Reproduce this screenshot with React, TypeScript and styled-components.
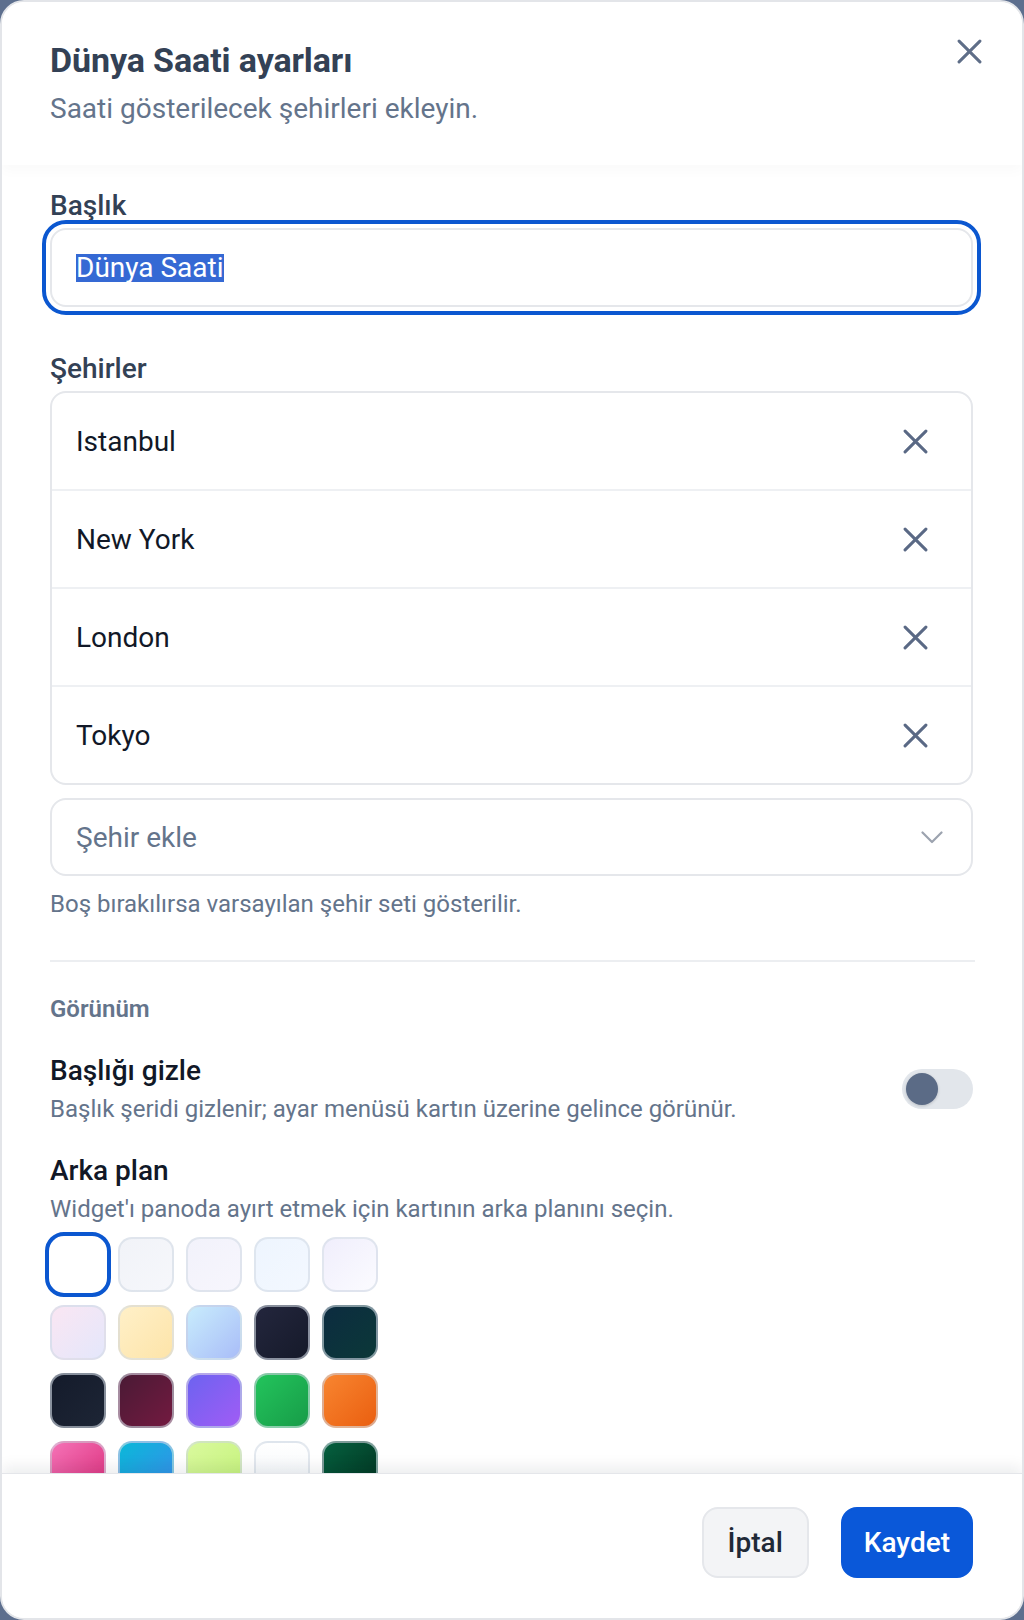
import React from 'react';
import styled, { createGlobalStyle } from 'styled-components';

interface Swatch {
  id: string;
  background: string;
  selected?: boolean;
}

const cities: string[] = ['Istanbul', 'New York', 'London', 'Tokyo'];

const swatches: Swatch[] = [
  { id: 'white', background: '#ffffff', selected: true },
  { id: 'slate', background: 'linear-gradient(135deg, #f1f3f8, #f6f7fb)' },
  { id: 'indigo', background: 'linear-gradient(135deg, #f2f2fb, #f7f6fd)' },
  { id: 'sky', background: 'linear-gradient(135deg, #eef5fe, #f3f8ff)' },
  { id: 'violet', background: 'linear-gradient(135deg, #f0eefc, #fbfbff)' },
  { id: 'blush', background: 'linear-gradient(135deg, #fae6f3, #e4e7fb)' },
  { id: 'amber', background: 'linear-gradient(135deg, #fff0c8, #fde4a9)' },
  { id: 'ice', background: 'linear-gradient(135deg, #c8ecfc, #a9bdf8)' },
  { id: 'navy', background: 'linear-gradient(135deg, #23263d, #161a2a)' },
  { id: 'teal', background: 'linear-gradient(135deg, #0c2c40, #0b3838)' },
  { id: 'ink', background: 'linear-gradient(135deg, #141b2b, #1d2535)' },
  { id: 'wine', background: 'linear-gradient(135deg, #4a1a35, #731a40)' },
  { id: 'purple', background: 'linear-gradient(135deg, #6d63f0, #a05cf5)' },
  { id: 'green', background: 'linear-gradient(135deg, #23c45c, #179c48)' },
  { id: 'orange', background: 'linear-gradient(135deg, #f88530, #ea5f10)' },
  { id: 'pink', background: 'linear-gradient(135deg, #f472b6, #dc2f7c)' },
  { id: 'cyan', background: 'linear-gradient(135deg, #0ab8d8, #3a8cec)' },
  { id: 'lime', background: 'linear-gradient(135deg, #d9f99d, #c4f27a)' },
  { id: 'paper', background: 'linear-gradient(180deg, #ffffff, #f1f5f9)' },
  { id: 'forest', background: 'linear-gradient(135deg, #05603f, #02321f)' },
];

const CloseIcon: React.FC<{ size: number }> = ({ size }) => (
  <svg width={size} height={size} viewBox="0 0 24 24" fill="none">
    <path d="M2 2L22 22M22 2L2 22" stroke="currentColor" strokeWidth="2.9" strokeLinecap="round" />
  </svg>
);

const ChevronIcon: React.FC = () => (
  <svg width="22" height="13" viewBox="0 0 22 13" fill="none">
    <path d="M1.5 1.5L11 11L20.5 1.5" stroke="currentColor" strokeWidth="2.2" strokeLinecap="round" strokeLinejoin="round" />
  </svg>
);

const App: React.FC = () => (
  <>
    <GlobalStyle />
    <Dialog>
      <Header>
        <HeaderText>
          <Title>Dünya Saati ayarları</Title>
          <Subtitle>Saati gösterilecek şehirleri ekleyin.</Subtitle>
        </HeaderText>
        <CloseButton aria-label="Kapat">
          <CloseIcon size={25} />
        </CloseButton>
      </Header>

      <Body>
        <Field>
          <Label>Başlık</Label>
          <TextBox>
            <Selected>Dünya Saati</Selected>
          </TextBox>
        </Field>

        <Field $gap={45}>
          <Label>Şehirler</Label>
          <CityList>
            {cities.map(city => (
              <CityRow key={city}>
                <CityName>{city}</CityName>
                <RemoveButton aria-label={`${city} kaldır`}>
                  <CloseIcon size={25} />
                </RemoveButton>
              </CityRow>
            ))}
          </CityList>
          <SelectBox>
            <Placeholder>Şehir ekle</Placeholder>
            <ChevronWrap>
              <ChevronIcon />
            </ChevronWrap>
          </SelectBox>
          <Helper>Boş bırakılırsa varsayılan şehir seti gösterilir.</Helper>
        </Field>

        <Divider />

        <SectionTitle>Görünüm</SectionTitle>

        <OptionRow>
          <OptionText>
            <OptionTitle>Başlığı gizle</OptionTitle>
            <OptionDesc>Başlık şeridi gizlenir; ayar menüsü kartın üzerine gelince görünür.</OptionDesc>
          </OptionText>
          <Toggle aria-label="Başlığı gizle">
            <Knob />
          </Toggle>
        </OptionRow>

        <OptionBlock>
          <OptionTitle>Arka plan</OptionTitle>
          <OptionDesc>Widget'ı panoda ayırt etmek için kartının arka planını seçin.</OptionDesc>
          <SwatchGrid>
            {swatches.map(s => (
              <SwatchButton key={s.id} $selected={!!s.selected} style={{ background: s.background }} />
            ))}
          </SwatchGrid>
        </OptionBlock>
      </Body>

      <Footer>
        <CancelButton>İptal</CancelButton>
        <SaveButton>Kaydet</SaveButton>
      </Footer>
    </Dialog>
  </>
);

const GlobalStyle = createGlobalStyle`
  * { box-sizing: border-box; }
  html, body {
    margin: 0;
    padding: 0;
    background: #5d6f8e;
    font-family: Roboto, "Noto Sans", "Liberation Sans", sans-serif;
  }
  button { font-family: inherit; }
`;

const Dialog = styled.div`
  width: 1024px;
  height: 1620px;
  background: #ffffff;
  border: 2px solid #e3e5e9;
  border-radius: 24px;
  display: flex;
  flex-direction: column;
  overflow: hidden;
`;

const Header = styled.div`
  position: relative;
  z-index: 1;
  flex: none;
  height: 163px;
  padding: 36px 37px 0 48px;
  display: flex;
  justify-content: space-between;
  align-items: flex-start;
  background: #ffffff;
  box-shadow: 0 6px 12px rgba(15, 23, 42, 0.025);
`;

const HeaderText = styled.div`
  display: flex;
  flex-direction: column;
`;

const Title = styled.h1`
  margin: 0;
  font-size: 34px;
  line-height: 44px;
  font-weight: 700;
  letter-spacing: -0.1px;
  color: #334155;
`;

const Subtitle = styled.p`
  margin: 10px 0 0;
  font-size: 28px;
  line-height: 34px;
  color: #64748b;
`;

const CloseButton = styled.button`
  width: 32px;
  height: 32px;
  margin-top: -3px;
  padding: 0;
  border: 0;
  background: none;
  color: #5f6e88;
  display: flex;
  align-items: center;
  justify-content: center;
`;

const Body = styled.div`
  flex: 1;
  min-height: 0;
  overflow: hidden;
  padding: 24px 49px 0 48px;
  display: flex;
  flex-direction: column;

  & > * {
    flex-shrink: 0;
  }
`;

const Field = styled.div<{ $gap?: number }>`
  display: flex;
  flex-direction: column;
  margin-top: ${p => p.$gap ?? 0}px;
`;

const Label = styled.label`
  font-size: 28px;
  line-height: 34px;
  font-weight: 500;
  color: #334155;
  margin-bottom: 5px;
`;

const TextBox = styled.div`
  height: 79px;
  border: 2px solid #e5e7eb;
  border-radius: 16px;
  outline: 4px solid #0b57d0;
  outline-offset: 4px;
  padding: 0 24px;
  display: flex;
  align-items: center;
  font-size: 28px;
  color: #111827;
`;

const Selected = styled.span`
  display: inline-block;
  line-height: 28px;
  background: #3569d4;
  color: #ffffff;
`;

const CityList = styled.div`
  border: 2px solid #e5e7eb;
  border-radius: 16px;
  overflow: hidden;
`;

const CityRow = styled.div`
  height: 98px;
  padding: 0 43px 0 24px;
  display: flex;
  align-items: center;
  justify-content: space-between;
  & + & {
    border-top: 2px solid #eef0f3;
  }
  &:first-child {
    height: 96px;
  }
`;

const CityName = styled.span`
  font-size: 28px;
  color: #111827;
`;

const RemoveButton = styled.button`
  padding: 0;
  border: 0;
  background: none;
  color: #5a6985;
  display: flex;
`;

const SelectBox = styled.div`
  margin-top: 13px;
  height: 78px;
  border: 2px solid #e5e7eb;
  border-radius: 16px;
  padding: 0 28px 0 24px;
  display: flex;
  align-items: center;
  justify-content: space-between;
`;

const Placeholder = styled.span`
  font-size: 28px;
  color: #64748b;
`;

const ChevronWrap = styled.span`
  display: flex;
  color: #9ca3af;
`;

const Helper = styled.p`
  margin: 12px 0 0;
  font-size: 24px;
  line-height: 32px;
  color: #64748b;
`;

const Divider = styled.hr`
  margin: 40px -2px 0 0;
  border: 0;
  height: 2px;
  background: #eceef1;
`;

const SectionTitle = styled.h2`
  margin: 31px 0 0;
  font-size: 24px;
  line-height: 32px;
  font-weight: 600;
  color: #64748b;
`;

const OptionRow = styled.div`
  margin-top: 28px;
  display: flex;
  align-items: center;
  justify-content: space-between;
`;

const OptionText = styled.div`
  display: flex;
  flex-direction: column;
`;

const OptionBlock = styled.div`
  margin-top: 28px;
  display: flex;
  flex-direction: column;
`;

const OptionTitle = styled.div`
  font-size: 28px;
  line-height: 36px;
  font-weight: 500;
  color: #111827;
`;

const OptionDesc = styled.div`
  margin-top: 4px;
  font-size: 24px;
  line-height: 32px;
  color: #64748b;
`;

const Toggle = styled.button`
  width: 71px;
  height: 40px;
  padding: 4px;
  border: 0;
  border-radius: 20px;
  background: #e2e6eb;
  display: flex;
  align-items: center;
`;

const Knob = styled.span`
  width: 32px;
  height: 32px;
  border-radius: 50%;
  background: #5b6b86;
  box-shadow: 0 1px 3px rgba(15, 23, 42, 0.2);
`;

const SwatchGrid = styled.div`
  margin-top: 12px;
  display: grid;
  grid-template-columns: repeat(5, 56px);
  grid-auto-rows: 55px;
  gap: 13px 12px;
`;

const SwatchButton = styled.button<{ $selected: boolean }>`
  padding: 0;
  border-radius: 14px;
  background-clip: border-box;
  border: 2px solid ${p => (p.$selected ? 'transparent' : 'rgba(210, 218, 228, 0.6)')};
  outline: ${p => (p.$selected ? '4px solid #0b57d0' : 'none')};
  outline-offset: 1px;
`;

const Footer = styled.div`
  position: relative;
  z-index: 2;
  flex: none;
  height: 145px;
  padding: 33px 49px 0 48px;
  display: flex;
  justify-content: flex-end;
  align-items: flex-start;
  gap: 32px;
  background: #ffffff;
  border-top: 1px solid #e4e6ea;
  box-shadow: 0 -6px 14px rgba(15, 23, 42, 0.08);
`;

const BaseButton = styled.button`
  height: 71px;
  padding: 0 21px;
  border-radius: 16px;
  font-size: 28px;
  font-weight: 500;
`;

const CancelButton = styled(BaseButton)`
  padding: 0 24px;
  background: #f3f4f6;
  border: 2px solid #e5e7eb;
  color: #1f2937;
`;

const SaveButton = styled(BaseButton)`
  background: #0a58d9;
  border: 2px solid #0a58d9;
  color: #ffffff;
`;

export default App;
